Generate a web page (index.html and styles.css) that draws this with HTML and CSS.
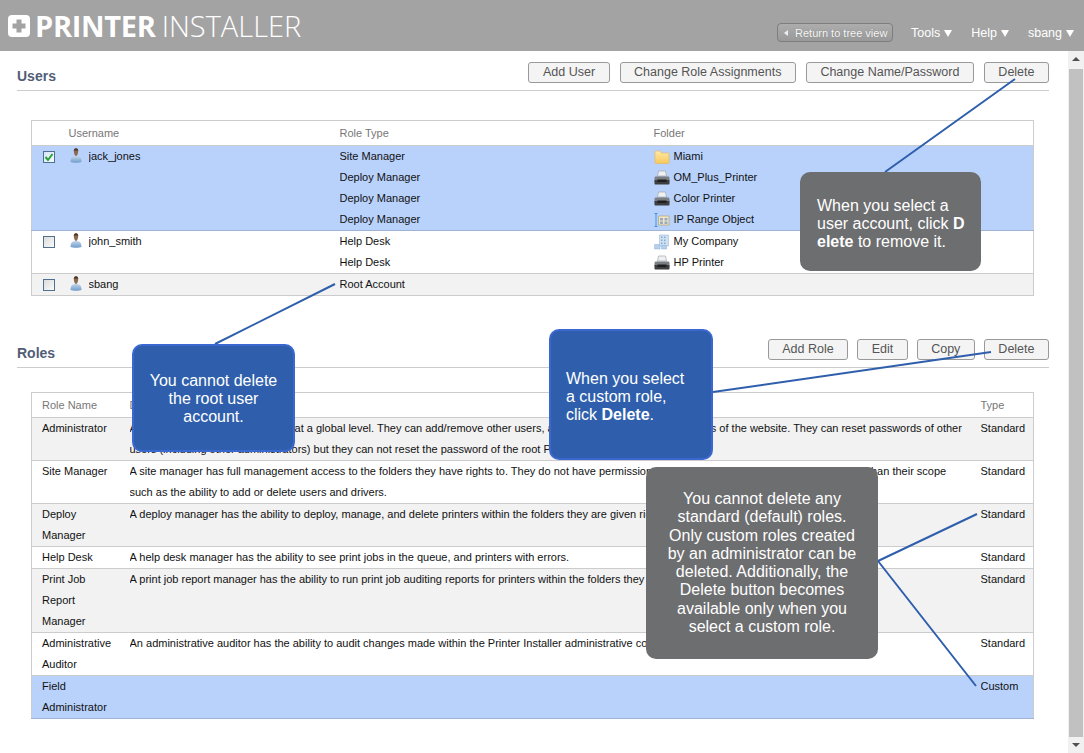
FILE: index.html
```html
<!DOCTYPE html>
<html lang="en">
<head>
<meta charset="utf-8">
<title>Printer Installer</title>
<link rel="stylesheet" href="styles.css">
</head>
<body>
<svg class="defs" width="0" height="0" aria-hidden="true">
  <defs>
    <linearGradient id="gShirt" x1="0" y1="0" x2="0" y2="1"><stop offset="0" stop-color="#c3d6ea"/><stop offset="1" stop-color="#6f9ccb"/></linearGradient>
    <linearGradient id="gFolder" x1="0" y1="0" x2="0" y2="1"><stop offset="0" stop-color="#ffe9a6"/><stop offset="1" stop-color="#f7c85c"/></linearGradient>
    <symbol id="i-user" viewBox="0 0 12 15">
      <path d="M.5 14c0-4 1.500-6 5.500-6s5.500 2 5.500 6c-2 1-9 1-11 0z" fill="url(#gShirt)"/>
      <path d="M3.800 3C3.800 1.200 4.700.2 6 .2s2.200 1 2.200 2.800S7.300 8 6 8 3.800 4.800 3.800 3z" fill="#8a6a4f"/>
      <path d="M3.800 3C3.800 1.200 4.700.2 6 .2s2.200 1 2.200 2.600C6.500 2.800 5.300 2 3.800 3z" fill="#4e3a2b"/>
    </symbol>
    <symbol id="i-folder" viewBox="0 0 16 14">
      <path d="M1 3V2a1 1 0 0 1 1-1h4l1.500 2H14a1 1 0 0 1 1 1v8.500a1 1 0 0 1-1 1H2a1 1 0 0 1-1-1z" fill="url(#gFolder)" stroke="#e2b96a" stroke-width=".7"/>
    </symbol>
    <symbol id="i-printer" viewBox="0 0 16 16">
      <path d="M4.500 1h7l1 5h-9z" fill="#eef0f2" stroke="#a4a8ac" stroke-width=".7"/>
      <path d="M2 6.500h12c.8 0 1.500.7 1.500 1.500v3.500H.5V8c0-.8.7-1.500 1.500-1.500z" fill="#7b7e80"/>
      <path d="M.5 10h15v3.500c0 .6-.4 1-1 1h-13c-.6 0-1-.4-1-1z" fill="#3c3e40"/>
      <path d="M3.500 9.500h9V12h-9z" fill="#1e1f20"/>
    </symbol>
    <symbol id="i-range" viewBox="0 0 16 16">
      <path d="M.5 1.500h3M2 1.500v13M.5 14.500h3" fill="none" stroke="#3f97e0" stroke-width="1"/>
      <path d="M4.500 4h10.500v9H4.500z" fill="#f0e6c8" stroke="#b2a27a" stroke-width=".7"/>
      <path d="M6 6h3v2.500H6zM10.500 6h3v2.500h-3zM6 9.500h3V12H6zM10.500 9.500h3V12h-3z" fill="#98a9bc"/>
    </symbol>
    <symbol id="i-company" viewBox="0 0 16 16">
      <path d="M5.500 1h9v11h-9z" fill="#cfe0f3" stroke="#a3bad4" stroke-width=".6"/>
      <path d="M7 2.500h1.500V4H7zM10 2.500h1.500V4H10zM7 5.500h1.500V7H7zM10 5.500h1.500V7H10zM7 8.500h1.500V10H7zM10 8.500h1.500V10H10z" fill="#86abd3"/>
      <path d="M.5 10.500h5.500v4.500H.5zM7.500 11.500h5v3.500h-5z" fill="#b4d0ec" stroke="#8fb0d4" stroke-width=".5"/>
    </symbol>
  </defs>
</svg>

<div class="app">
  <header class="topbar">
    <div class="logo">
      <svg class="logo-mark" viewBox="0 0 22 22" aria-hidden="true">
        <rect width="22" height="22" rx="4" fill="#fff"/>
        <path d="M8.500 4.500h5v4h4v5h-4v4h-5v-4h-4v-5h4z" fill="#a3a3a3"/>
      </svg>
      <span class="logo-bold">PRINTER</span><span class="logo-light">INSTALLER</span>
    </div>
    <nav class="nav">
      <a class="return-btn"><span class="return-arrow"></span>Return to tree view</a>
      <span class="nav-item nav-tools">Tools<span class="caret"></span></span>
      <span class="nav-item nav-help">Help<span class="caret"></span></span>
      <span class="nav-item nav-user">sbang<span class="caret"></span></span>
    </nav>
  </header>

  <div class="workspace">
    <main class="main">
      <section class="users-section">
        <div class="section-head">
          <h2 class="section-title">Users</h2>
          <div class="actions">
            <button class="btn">Add User</button>
            <button class="btn">Change Role Assignments</button>
            <button class="btn">Change Name/Password</button>
            <button class="btn">Delete</button>
          </div>
        </div>
        <table class="grid users-grid">
          <colgroup><col class="c-check"><col class="c-icon"><col class="c-name"><col class="c-role"><col></colgroup>
          <thead>
            <tr><th></th><th colspan="2" class="th-user">Username</th><th>Role Type</th><th>Folder</th></tr>
          </thead>
          <tbody class="selected">
            <tr>
              <td class="cell-check"><span class="check checked"><svg viewBox="0 0 10 10"><path d="M1.500 5l2.500 3 4.500-6" fill="none" stroke="#2aa23a" stroke-width="2"/></svg></span></td>
              <td class="cell-icon"><svg class="ic-user"><use href="#i-user"/></svg></td>
              <td>jack_jones</td><td>Site Manager</td>
              <td><span class="folder"><svg class="ic"><use href="#i-folder"/></svg>Miami</span></td>
            </tr>
            <tr><td colspan="3"></td><td>Deploy Manager</td><td><span class="folder"><svg class="ic"><use href="#i-printer"/></svg>OM_Plus_Printer</span></td></tr>
            <tr><td colspan="3"></td><td>Deploy Manager</td><td><span class="folder"><svg class="ic"><use href="#i-printer"/></svg>Color Printer</span></td></tr>
            <tr><td colspan="3"></td><td>Deploy Manager</td><td><span class="folder"><svg class="ic"><use href="#i-range"/></svg>IP Range Object</span></td></tr>
          </tbody>
          <tbody>
            <tr>
              <td class="cell-check"><span class="check"></span></td>
              <td class="cell-icon"><svg class="ic-user"><use href="#i-user"/></svg></td>
              <td>john_smith</td><td>Help Desk</td>
              <td><span class="folder"><svg class="ic"><use href="#i-company"/></svg>My Company</span></td>
            </tr>
            <tr><td colspan="3"></td><td>Help Desk</td><td><span class="folder"><svg class="ic"><use href="#i-printer"/></svg>HP Printer</span></td></tr>
          </tbody>
          <tbody class="alt">
            <tr>
              <td class="cell-check"><span class="check"></span></td>
              <td class="cell-icon"><svg class="ic-user"><use href="#i-user"/></svg></td>
              <td>sbang</td><td>Root Account</td><td></td>
            </tr>
          </tbody>
        </table>
      </section>

      <section class="roles-section">
        <div class="section-head">
          <h2 class="section-title">Roles</h2>
          <div class="actions actions-tight">
            <button class="btn">Add Role</button>
            <button class="btn">Edit</button>
            <button class="btn">Copy</button>
            <button class="btn">Delete</button>
          </div>
        </div>
        <table class="grid roles-grid">
          <colgroup><col class="c-rname"><col><col class="c-type"></colgroup>
          <thead>
            <tr><th>Role Name</th><th>Description</th><th>Type</th></tr>
          </thead>
          <tbody class="alt"><tr>
            <td>Administrator</td>
            <td>An administrator has total access at a global level. They can add/remove other users, and modify all settings and options of the website. They can reset passwords of other<br>users (including other administrators) but they can not reset the password of the root Printer Installer account.</td>
            <td>Standard</td>
          </tr></tbody>
          <tbody><tr>
            <td>Site Manager</td>
            <td>A site manager has full management access to the folders they have rights to. They do not have permissions to change any settings, which are broader than their scope<br>such as the ability to add or delete users and drivers.</td>
            <td>Standard</td>
          </tr></tbody>
          <tbody class="alt"><tr>
            <td>Deploy<br>Manager</td>
            <td>A deploy manager has the ability to deploy, manage, and delete printers within the folders they are given rights to.</td>
            <td>Standard</td>
          </tr></tbody>
          <tbody><tr>
            <td>Help Desk</td>
            <td>A help desk manager has the ability to see print jobs in the queue, and printers with errors.</td>
            <td>Standard</td>
          </tr></tbody>
          <tbody class="alt"><tr>
            <td>Print Job<br>Report<br>Manager</td>
            <td>A print job report manager has the ability to run print job auditing reports for printers within the folders they are given rights to.</td>
            <td>Standard</td>
          </tr></tbody>
          <tbody><tr>
            <td>Administrative<br>Auditor</td>
            <td>An administrative auditor has the ability to audit changes made within the Printer Installer administrative console.</td>
            <td>Standard</td>
          </tr></tbody>
          <tbody class="selected"><tr>
            <td>Field<br>Administrator</td>
            <td></td>
            <td>Custom</td>
          </tr></tbody>
        </table>
      </section>
    </main>

    <div class="scrollbar" aria-hidden="true">
      <span class="sb-arrow sb-up"></span>
      <span class="sb-thumb"></span>
      <span class="sb-arrow sb-down"></span>
    </div>
  </div>

  <svg class="leaders" width="1084" height="753" aria-hidden="true">
    <path d="M885 172L1015 79M215 344L335 284M713 392L991 352M878 561L977 514M878 561L976 686"/>
  </svg>

  <div class="callout gray c-delete-user">When you select a user account, click <b>D<br>elete</b> to remove it.</div>
  <div class="callout blue c-root">You cannot delete the root user account.</div>
  <div class="callout blue c-custom">When you select a custom role, click <b>Delete</b>.</div>
  <div class="callout gray c-standard">You cannot delete any standard (default) roles. Only custom roles created by an administrator can be deleted. Additionally, the Delete button becomes available only when you select a custom role.</div>
</div>
</body>
</html>
```

FILE: styles.css
```css
* { box-sizing: border-box; }
html, body { margin: 0; height: 100%; overflow: hidden; }
body { font-family: "Liberation Sans", Arial, sans-serif; font-size: 11px; color: #111; background: #fff; }
.defs { position: absolute; }

.app { position: relative; width: 1084px; height: 753px; display: flex; flex-direction: column; overflow: hidden; }

/* top bar */
.topbar { height: 51px; flex: none; background: #a3a3a3; display: flex; justify-content: space-between; padding: 0 10px 0 8px; }
.logo { display: flex; align-items: center; height: 51px; color: #fff; font-family: "Open Sans", sans-serif; font-size: 29px; letter-spacing: -0.3px; white-space: nowrap; }
.logo-mark { width: 22px; height: 22px; margin-right: 5px; flex: none; }
.logo-bold { font-weight: 700; }
.logo-light { font-weight: 300; margin-left: 6px; letter-spacing: 0; }
.nav { display: flex; align-items: center; padding-top: 14px; color: #fff; }
.return-btn { display: flex; align-items: center; width: 116px; height: 19px; margin-right: 18px; padding-left: 6px; border: 1px solid #7d7d7d; border-radius: 4px; background: linear-gradient(#adadad, #999); font-size: 11px; color: #f8f8f8; text-shadow: 0 0 1px #777; white-space: nowrap; }
.return-arrow { width: 0; height: 0; margin-right: 7px; border: 3px solid transparent; border-left: 0; border-right: 4px solid #eee; }
.nav-item { display: flex; align-items: center; font-size: 12.500px; white-space: nowrap; margin-left: 19px; }
.nav-tools { margin-left: 0; }
.caret { width: 0; height: 0; margin: 2px 0 0 4px; border-left: 4px solid transparent; border-right: 4px solid transparent; border-top: 7px solid #fff; }

/* layout */
.workspace { flex: 1; display: flex; min-height: 0; }
.main { flex: 1; padding: 11px 19px 0 17px; min-width: 0; }
.section-head { display: flex; justify-content: space-between; align-items: flex-start; height: 29px; border-bottom: 1px solid #ccc; }
.section-title { margin: 6px 0 0; font-size: 14px; line-height: 16px; font-weight: 700; color: #525d76; }
.actions { display: flex; gap: 10px; }
.actions-tight { gap: 9px; }
.btn { height: 21px; padding: 0 13.500px 2px; border: 1px solid #999; border-radius: 3px; background: #f4f4f4; font: 12.500px "Liberation Sans", Arial, sans-serif; color: #555; white-space: nowrap; }

/* tables */
.grid { width: 1003px; margin-left: 14px; border-collapse: collapse; table-layout: fixed; border: 1px solid #ccc; background: #fff; }
.grid th { height: 25px; padding: 0; font-weight: 400; text-align: left; color: #777; border-bottom: 1px solid #ccc; }
.grid td { padding: 0; line-height: 21px; height: 21px; vertical-align: top; white-space: nowrap; overflow: hidden; }
.grid tbody { border-bottom: 1px solid #ccc; }
.grid tbody.alt { background: #f2f2f2; }
.grid tbody.selected { background: #b9d2fb; border-bottom-color: #9fb4d2; }

.users-grid { margin-top: 29px; }
.c-check { width: 37px; }
.c-icon { width: 20px; }
.c-name { width: 251px; }
.c-role { width: 314px; }
.cell-check { padding-left: 11px !important; }
.check { display: block; width: 12px; height: 12px; margin-top: 5px; border: 1px solid #50708f; background: linear-gradient(135deg, #dcdcdc, #fafafa); }
.check svg { display: block; width: 10px; height: 10px; }
.check.checked { background: linear-gradient(135deg, #d6e4f7, #f6f9fe); }
.ic-user { display: block; width: 12px; height: 15px; margin: 2px 0 0 1px; }
.folder { display: flex; align-items: center; height: 21px; }
.ic { width: 16px; height: 16px; margin-right: 4px; flex: none; }

.roles-section { margin-top: 43px; }
.roles-grid { margin-top: 24px; }
.roles-grid th:first-child, .roles-grid td:first-child { padding-left: 10px; }
.c-rname { width: 98px; }
.c-type { width: 53px; }

/* scrollbar */
.scrollbar { width: 16px; flex: none; display: flex; flex-direction: column; align-items: center; background: #f1f1f1; }
.sb-arrow { flex: none; width: 0; height: 0; margin: 6px 0; border-left: 4px solid transparent; border-right: 4px solid transparent; }
.sb-up { border-bottom: 4px solid #505050; }
.sb-down { border-top: 4px solid #505050; margin-top: 6px; }
.sb-thumb { flex: 1; width: 14px; margin: 2px 0 0; background: #c1c1c1; }

/* callouts */
.leaders { position: absolute; left: 0; top: 0; pointer-events: none; }
.leaders path { fill: none; stroke: #2f5fac; stroke-width: 2; }
.callout { position: absolute; color: #fff; font-size: 16px; line-height: 18px; border-radius: 10px; }
.callout.gray { background: #6d6e70; }
.callout.blue { background: #2f5fac; border: 2px solid #3b68d0; }
.c-delete-user { left: 800px; top: 172px; width: 181px; height: 99px; padding: 25px 10px 0 17px; }
.c-root { left: 132px; top: 344px; width: 163px; height: 108px; padding: 26px 14px 0; text-align: center; }
.c-custom { left: 549px; top: 329px; width: 164px; height: 131px; padding: 39px 20px 0 15px; }
.c-standard { left: 646px; top: 467px; width: 232px; height: 192px; padding: 23px 14px 0; line-height: 18.300px; text-align: center; }
```
